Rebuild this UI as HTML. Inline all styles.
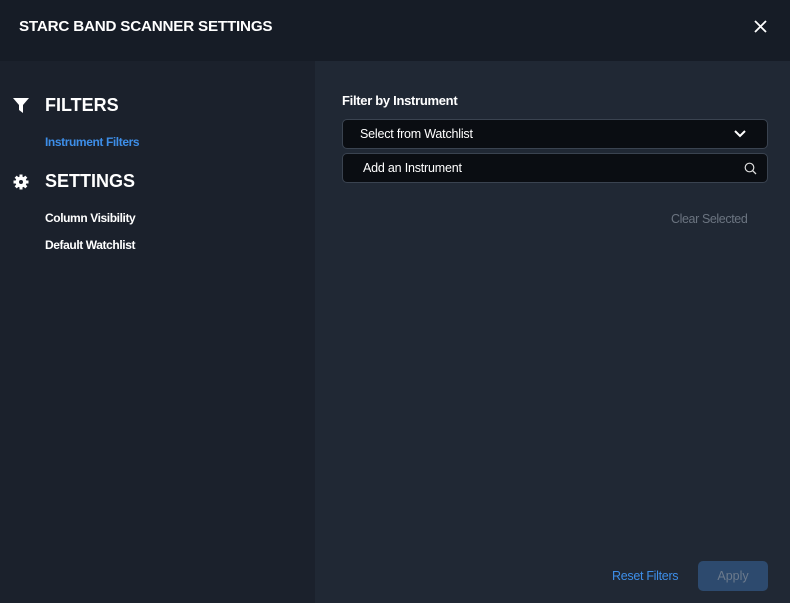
<!DOCTYPE html>
<html><head><meta charset="utf-8"><style>
*{margin:0;padding:0;box-sizing:border-box}
body{width:790px;height:603px;overflow:hidden;background:#202834;font-family:"Liberation Sans",sans-serif;color:#fff;position:relative}
.hdr{position:absolute;left:0;top:0;width:790px;height:61px;background:#161c26}
.title{position:absolute;left:19px;top:18px;font-size:15.2px;font-weight:bold;letter-spacing:-0.2px}
.side{position:absolute;left:0;top:61px;width:315px;height:542px;background:#1b212c}
.h{position:absolute;left:45px;font-size:18px;font-weight:bold}
.l{position:absolute;left:45px;font-size:12px;font-weight:bold;letter-spacing:-0.4px}
.box{position:absolute;left:342px;width:426px;height:30px;background:#0a0d12;border:1px solid #3a4350;border-radius:5px;font-size:12.5px;letter-spacing:-0.2px}
</style></head><body>
<div class="hdr"><div class="title">STARC BAND SCANNER SETTINGS</div>
<svg style="position:absolute;left:754px;top:20px" width="13" height="13"><path d="M1 1L12 12M12 1L1 12" stroke="#fff" stroke-width="1.8"/></svg></div>
<div class="side">
<svg style="position:absolute;left:13px;top:37px" width="16" height="15"><path d="M0 0H16L10 7V15L6 12V7Z" fill="#fff"/></svg>
<div class="h" style="top:34px">FILTERS</div>
<div class="l" style="top:74px;color:#3d8ee8">Instrument Filters</div>
<svg style="position:absolute;left:13px;top:113px" width="16" height="16" viewBox="0 0 16 16"><g fill="#fff"><circle cx="8" cy="8" r="5.5"/><rect x="6.5" y="0.5" width="3" height="15"/><rect x="0.5" y="6.5" width="15" height="3"/><rect x="6.5" y="0.5" width="3" height="15" transform="rotate(45 8 8)"/><rect x="6.5" y="0.5" width="3" height="15" transform="rotate(-45 8 8)"/></g><circle cx="8" cy="8" r="2" fill="#1b212c"/></svg>
<div class="h" style="top:110px">SETTINGS</div>
<div class="l" style="top:150px">Column Visibility</div>
<div class="l" style="top:177px">Default Watchlist</div>
</div>
<div style="position:absolute;left:342px;top:93px;font-size:13px;font-weight:bold;letter-spacing:-0.3px">Filter by Instrument</div>
<div class="box" style="top:119px"><span style="position:absolute;left:17px;top:7px">Select from Watchlist</span>
<svg style="position:absolute;left:391px;top:10px" width="12" height="8"><path d="M1 1L6 6L11 1" stroke="#fff" stroke-width="2" fill="none"/></svg></div>
<div class="box" style="top:153px"><span style="position:absolute;left:20px;top:7px">Add an Instrument</span>
<svg style="position:absolute;left:401px;top:8px" width="13" height="13"><circle cx="5.5" cy="5.5" r="4.3" stroke="#ddd" stroke-width="1.2" fill="none"/><path d="M8.6 8.6L12 12" stroke="#ddd" stroke-width="1.3"/></svg></div>
<div style="position:absolute;left:671px;top:212px;font-size:12.5px;color:#6b7480;letter-spacing:-0.4px">Clear Selected</div>
<div style="position:absolute;left:612px;top:569px;font-size:12.5px;color:#3d8ee8;letter-spacing:-0.3px">Reset Filters</div>
<div style="position:absolute;left:698px;top:561px;width:70px;height:30px;background:#2d4a6e;border-radius:5px;color:#6c7a8c;font-size:12.5px;text-align:center;line-height:30px">Apply</div>
</body></html>
